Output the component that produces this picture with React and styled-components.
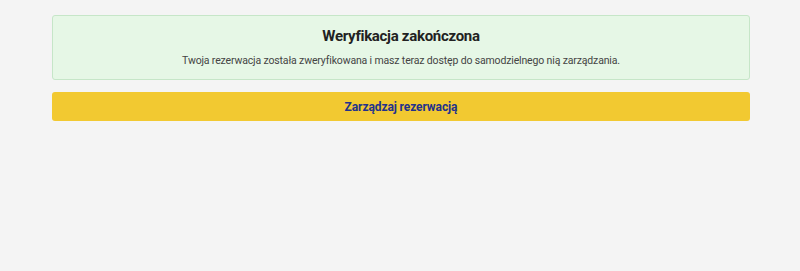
import React from 'react';
import styled, { createGlobalStyle } from 'styled-components';

const GlobalStyle = createGlobalStyle`
    html, body {
        margin: 0;
        padding: 0;
        background: #f4f4f4;
        font-family: Roboto, "Liberation Sans", sans-serif;
    }
`;

function App() {
    return (
        <>
            <GlobalStyle />
            <Page>
                <Alert>
                    <Title>Weryfikacja zakończona</Title>
                    <Message>
                        Twoja rezerwacja została zweryfikowana i masz teraz dostęp do samodzielnego nią zarządzania.
                    </Message>
                </Alert>
                <ManageButton type="button">Zarządzaj rezerwacją</ManageButton>
            </Page>
        </>
    );
}

export default App;

const Page = styled.div`
    width: 698px;
    min-height: 271px;
    box-sizing: border-box;
    margin: 0 0 0 52px;
    padding-top: 15px;
    display: flex;
    flex-direction: column;
    gap: 12px;
`;

const Alert = styled.div`
    box-sizing: border-box;
    height: 65px;
    background: #e6f7e6;
    border: 1px solid #c6e6c8;
    border-radius: 3px;
    display: flex;
    flex-direction: column;
    align-items: center;
    padding-top: 10px;
`;

const Title = styled.h2`
    margin: 0;
    font-size: 15px;
    letter-spacing: -0.3px;
    font-weight: 700;
    color: #222;
    line-height: 20px;
`;

const Message = styled.p`
    margin: 7px 0 0;
    font-size: 10.5px;
    letter-spacing: -0.15px;
    color: #444;
    line-height: 16px;
`;

const ManageButton = styled.button`
    height: 29px;
    border: none;
    border-radius: 3px;
    background: #f2c931;
    color: #22318c;
    font-family: Roboto, "Liberation Sans", sans-serif;
    font-size: 12px;
    letter-spacing: -0.1px;
    font-weight: 700;
    cursor: pointer;
`;
